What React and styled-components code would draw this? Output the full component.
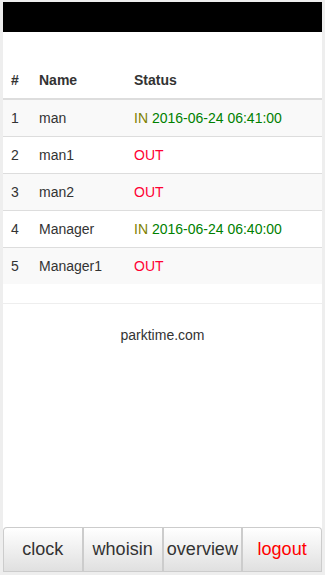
import styled, { createGlobalStyle } from "styled-components";

const GlobalStyle = createGlobalStyle`
  html, body {
    margin: 0;
    padding: 0;
    background: #eeeeee;
    font-family: "Liberation Sans", Arial, sans-serif;
    font-size: 14px;
    color: #333;
  }
`;

const Page = styled.div`
  margin: 2px 3px 0 3px;
  height: calc(100vh - 5px);
  background: #fff;
  display: flex;
  flex-direction: column;
`;

const Navbar = styled.div`
  height: 30px;
  background: #000;
  flex-shrink: 0;
`;

const Table = styled.table`
  width: 100%;
  margin-top: 30px;
  border-collapse: collapse;
  border-spacing: 0;
`;

const Th = styled.th`
  width: ${(p) => p.$width || "auto"};
  padding: 8px;
  text-align: left;
  font-weight: bold;
  line-height: 20px;
  border-bottom: 2px solid #ddd;
`;

const Row = styled.tr`
  background: ${(p) => (p.$striped ? "#f9f9f9" : "#fff")};
`;

const Td = styled.td`
  padding: 8px;
  line-height: 20px;
  vertical-align: top;
  border-top: 1px solid #ddd;
`;

const In = styled.span`
  color: #808000;
`;

const Time = styled.span`
  color: #008000;
`;

const Out = styled.span`
  color: #ff0033;
`;

const Rule = styled.hr`
  margin: 19px 0 0 0;
  border: 0;
  border-top: 1px solid #eee;
`;

const Footer = styled.p`
  margin: 0;
  padding-top: 21px;
  line-height: 20px;
  text-align: center;
`;

const ButtonBar = styled.div`
  margin-top: auto;
  display: flex;
  flex-shrink: 0;
`;

const NavButton = styled.button`
  flex: 1;
  height: 45px;
  padding: 0;
  font-family: "Liberation Sans", Arial, sans-serif;
  font-size: 18px;
  color: ${(p) => (p.$danger ? "#ff0000" : "#333")};
  background: linear-gradient(to bottom, #ffffff 0%, #e0e0e0 100%);
  border: 1px solid #ccc;
  border-left-width: 0;
  border-right-width: 2px;
  &:first-child {
    border-left-width: 1px;
    border-top-left-radius: 4px;
  }
  &:last-child {
    border-right-width: 1px;
    border-top-right-radius: 4px;
  }
`;

const people = [
  { id: 1, name: "man", inAt: "2016-06-24 06:41:00" },
  { id: 2, name: "man1" },
  { id: 3, name: "man2" },
  { id: 4, name: "Manager", inAt: "2016-06-24 06:40:00" },
  { id: 5, name: "Manager1" },
];

export default function App() {
  return (
    <>
      <GlobalStyle />
      <Page>
        <Navbar />
        <Table>
          <thead>
            <tr>
              <Th $width="12px">#</Th>
              <Th $width="79px">Name</Th>
              <Th>Status</Th>
            </tr>
          </thead>
          <tbody>
            {people.map((p, i) => (
              <Row key={p.id} $striped={i % 2 === 0}>
                <Td>{p.id}</Td>
                <Td>{p.name}</Td>
                <Td>
                  {p.inAt ? (
                    <>
                      <In>IN</In> <Time>{p.inAt}</Time>
                    </>
                  ) : (
                    <Out>OUT</Out>
                  )}
                </Td>
              </Row>
            ))}
          </tbody>
        </Table>
        <Rule />
        <Footer>parktime.com</Footer>
        <ButtonBar>
          <NavButton>clock</NavButton>
          <NavButton>whoisin</NavButton>
          <NavButton>overview</NavButton>
          <NavButton $danger>logout</NavButton>
        </ButtonBar>
      </Page>
    </>
  );
}
